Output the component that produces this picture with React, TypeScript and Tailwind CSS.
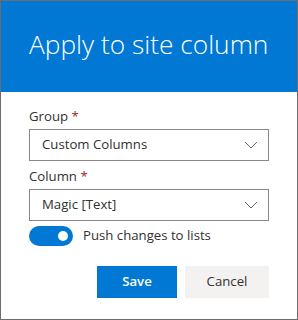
import { useState } from "react";

function Chevron() {
  return (
    <svg width="14" height="8" viewBox="0 0 14 8" fill="none" className="shrink-0">
      <path d="M1 1l6 6 6-6" stroke="#666" strokeWidth="1" />
    </svg>
  );
}

function Dropdown({ value }: { value: string }) {
  return (
    <div className="flex items-center justify-between h-8 border border-[#8a8886] pl-3 pr-[10px] text-[#323130]">
      <span>{value}</span>
      <Chevron />
    </div>
  );
}

export default function App() {
  const [push, setPush] = useState(true);

  return (
    <div
      className="w-[298px] h-[320px] border border-[#6d6d6d] bg-white flex flex-col text-[13.2px] text-[#323130]"
      style={{ fontFamily: '"Open Sans", "Noto Sans", sans-serif' }}
    >
      {/* Header */}
      <div className="h-[91px] bg-[#0078d4] flex items-center pl-[28px]">
        <h1 className="text-white text-[26.3px] font-light leading-none pb-1">Apply to site column</h1>
      </div>

      {/* Body */}
      <div className="flex flex-col px-[28px] pt-[14px]">
        <label className="leading-5 mb-[3px]">
          Group <span className="text-[#a4262c]">*</span>
        </label>
        <Dropdown value="Custom Columns" />

        <label className="leading-5 mt-[5px] mb-[3px]">
          Column <span className="text-[#a4262c]">*</span>
        </label>
        <Dropdown value="Magic [Text]" />

        <div className="flex items-center gap-[10px] mt-[5px] h-5">
          <button
            onClick={() => setPush(!push)}
            className={`w-[44px] h-5 rounded-full flex items-center px-[5px] ${push ? "bg-[#0078d4] justify-end" : "bg-white border border-[#323130] justify-start"}`}
          >
            <span className={`w-[10px] h-[10px] rounded-full ${push ? "bg-white" : "bg-[#323130]"}`} />
          </button>
          <span>Push changes to lists</span>
        </div>

        <div className="flex justify-end gap-2 mt-5">
          <button className="w-20 h-8 bg-[#0078d4] text-white font-semibold">Save</button>
          <button className="w-[84px] h-8 bg-[#f3f2f1] text-[#323130]">Cancel</button>
        </div>
      </div>
    </div>
  );
}
